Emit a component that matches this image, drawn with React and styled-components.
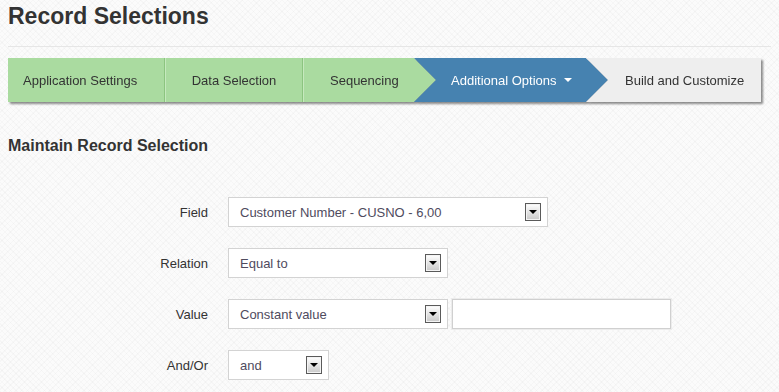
import React from 'react';
import styled, { createGlobalStyle } from 'styled-components';

const GlobalStyle = createGlobalStyle`
  html, body {
    margin: 0;
    padding: 0;
  }
  body {
    font-family: "Liberation Sans", Arial, sans-serif;
    color: #333;
    background-color: #fbfbfb;
    background-image:
      repeating-linear-gradient(45deg, rgba(0, 0, 0, 0.018) 0 1px, transparent 1px 4px),
      repeating-linear-gradient(-45deg, rgba(0, 0, 0, 0.018) 0 1px, transparent 1px 4px);
    min-height: 392px;
  }
`;

const Page = styled.div`
  padding: 0 8px;
`;

const Title = styled.h1`
  margin: 5px 0 0;
  font-size: 23px;
  line-height: 22px;
  font-weight: bold;
  color: #333;
`;

const Rule = styled.hr`
  margin: 19px 0 11px;
  border: none;
  border-top: 1px solid #e6e6e6;
  height: 0;
`;

const Steps = styled.div`
  display: flex;
  height: 44px;
  width: 751px;
  filter: drop-shadow(2px 2px 1px rgba(0, 0, 0, 0.45));
`;

const tones = {
  done: { bg: '#aadba0', fg: '#333' },
  active: { bg: '#4682b0', fg: '#fff' },
  todo: { bg: '#eeeeee', fg: '#333' },
};

const Step = styled.div`
  flex: none;
  box-sizing: border-box;
  display: flex;
  align-items: center;
  justify-content: ${(p) => (p.$center ? 'center' : 'flex-start')};
  width: ${(p) => p.$w}px;
  margin-left: ${(p) => (p.$notch ? -22 : 0)}px;
  padding-left: ${(p) => p.$pl || 0}px;
  font-size: 13px;
  background: ${(p) => tones[p.$tone].bg};
  color: ${(p) => tones[p.$tone].fg};
  border-right: ${(p) => (p.$divider ? '1px solid #8cc480' : 'none')};
  border-left: ${(p) => (p.$lightEdge ? '1px solid #c6e9be' : 'none')};
  clip-path: ${(p) => {
    const right = p.$arrow
      ? 'calc(100% - 22px) 0, 100% 50%, calc(100% - 22px) 100%'
      : '100% 0, 100% 100%';
    const left = p.$notch ? '0 100%, 22px 50%' : '0 100%';
    return `polygon(0 0, ${right}, ${left})`;
  }};
`;

const Caret = styled.span`
  display: inline-block;
  margin-left: ${(p) => (p.$inline ? 7 : 0)}px;
  border-left: 4px solid transparent;
  border-right: 4px solid transparent;
  border-top: 4px solid ${(p) => p.$color || '#000'};
`;

const Section = styled.h2`
  margin: 34px 0 41px;
  font-size: 16px;
  line-height: 20px;
  font-weight: bold;
  color: #333;
`;

const Form = styled.div`
  display: flex;
  flex-direction: column;
  gap: 21px;
`;

const Row = styled.div`
  display: flex;
  align-items: center;
  height: 30px;
`;

const Label = styled.label`
  width: 200px;
  margin-right: 20px;
  text-align: right;
  font-size: 13px;
  color: #333;
`;

const Select = styled.div`
  box-sizing: border-box;
  display: flex;
  align-items: center;
  justify-content: space-between;
  width: ${(p) => p.$w}px;
  height: 30px;
  padding: 0 6px 0 11px;
  background: #fff;
  border: 1px solid #d3d3d3;
  font-size: 13px;
  color: #4f4b5e;
`;

const ArrowBox = styled.span`
  box-sizing: border-box;
  display: flex;
  align-items: center;
  justify-content: center;
  width: 16px;
  height: 18px;
  border: 1px solid #5a5a5a;
  background: linear-gradient(#ffffff, #c9c9c9);
  box-shadow: inset 0 0 0 1px #f4f4f4;
`;

const TextInput = styled.input`
  box-sizing: border-box;
  width: 219px;
  height: 30px;
  margin-left: 4px;
  border: 1px solid #d0d0d0;
  box-shadow: 0 0 0 1px #ececec;
  background: #fff;
  outline: none;
`;

const Dropdown = ({ w, value }) => (
  <Select $w={w}>
    <span>{value}</span>
    <ArrowBox>
      <Caret />
    </ArrowBox>
  </Select>
);

export default function App() {
  return (
    <Page>
      <GlobalStyle />
      <Title>Record Selections</Title>
      <Rule />
      <Steps>
        <Step $tone="done" $w={157} $pl={15} $divider>Application Settings</Step>
        <Step $tone="done" $w={138} $center $lightEdge $divider>Data Selection</Step>
        <Step $tone="done" $w={133} $pl={26} $arrow $lightEdge>Sequencing</Step>
        <Step $tone="active" $w={194} $pl={37} $arrow $notch>
          Additional Options
          <Caret $inline $color="#fff" />
        </Step>
        <Step $tone="todo" $w={175} $pl={39} $notch>Build and Customize</Step>
      </Steps>
      <Section>Maintain Record Selection</Section>
      <Form>
        <Row>
          <Label>Field</Label>
          <Dropdown w={320} value="Customer Number - CUSNO - 6,00" />
        </Row>
        <Row>
          <Label>Relation</Label>
          <Dropdown w={220} value="Equal to" />
        </Row>
        <Row>
          <Label>Value</Label>
          <Dropdown w={220} value="Constant value" />
          <TextInput type="text" />
        </Row>
        <Row>
          <Label>And/Or</Label>
          <Dropdown w={101} value="and" />
        </Row>
      </Form>
    </Page>
  );
}
